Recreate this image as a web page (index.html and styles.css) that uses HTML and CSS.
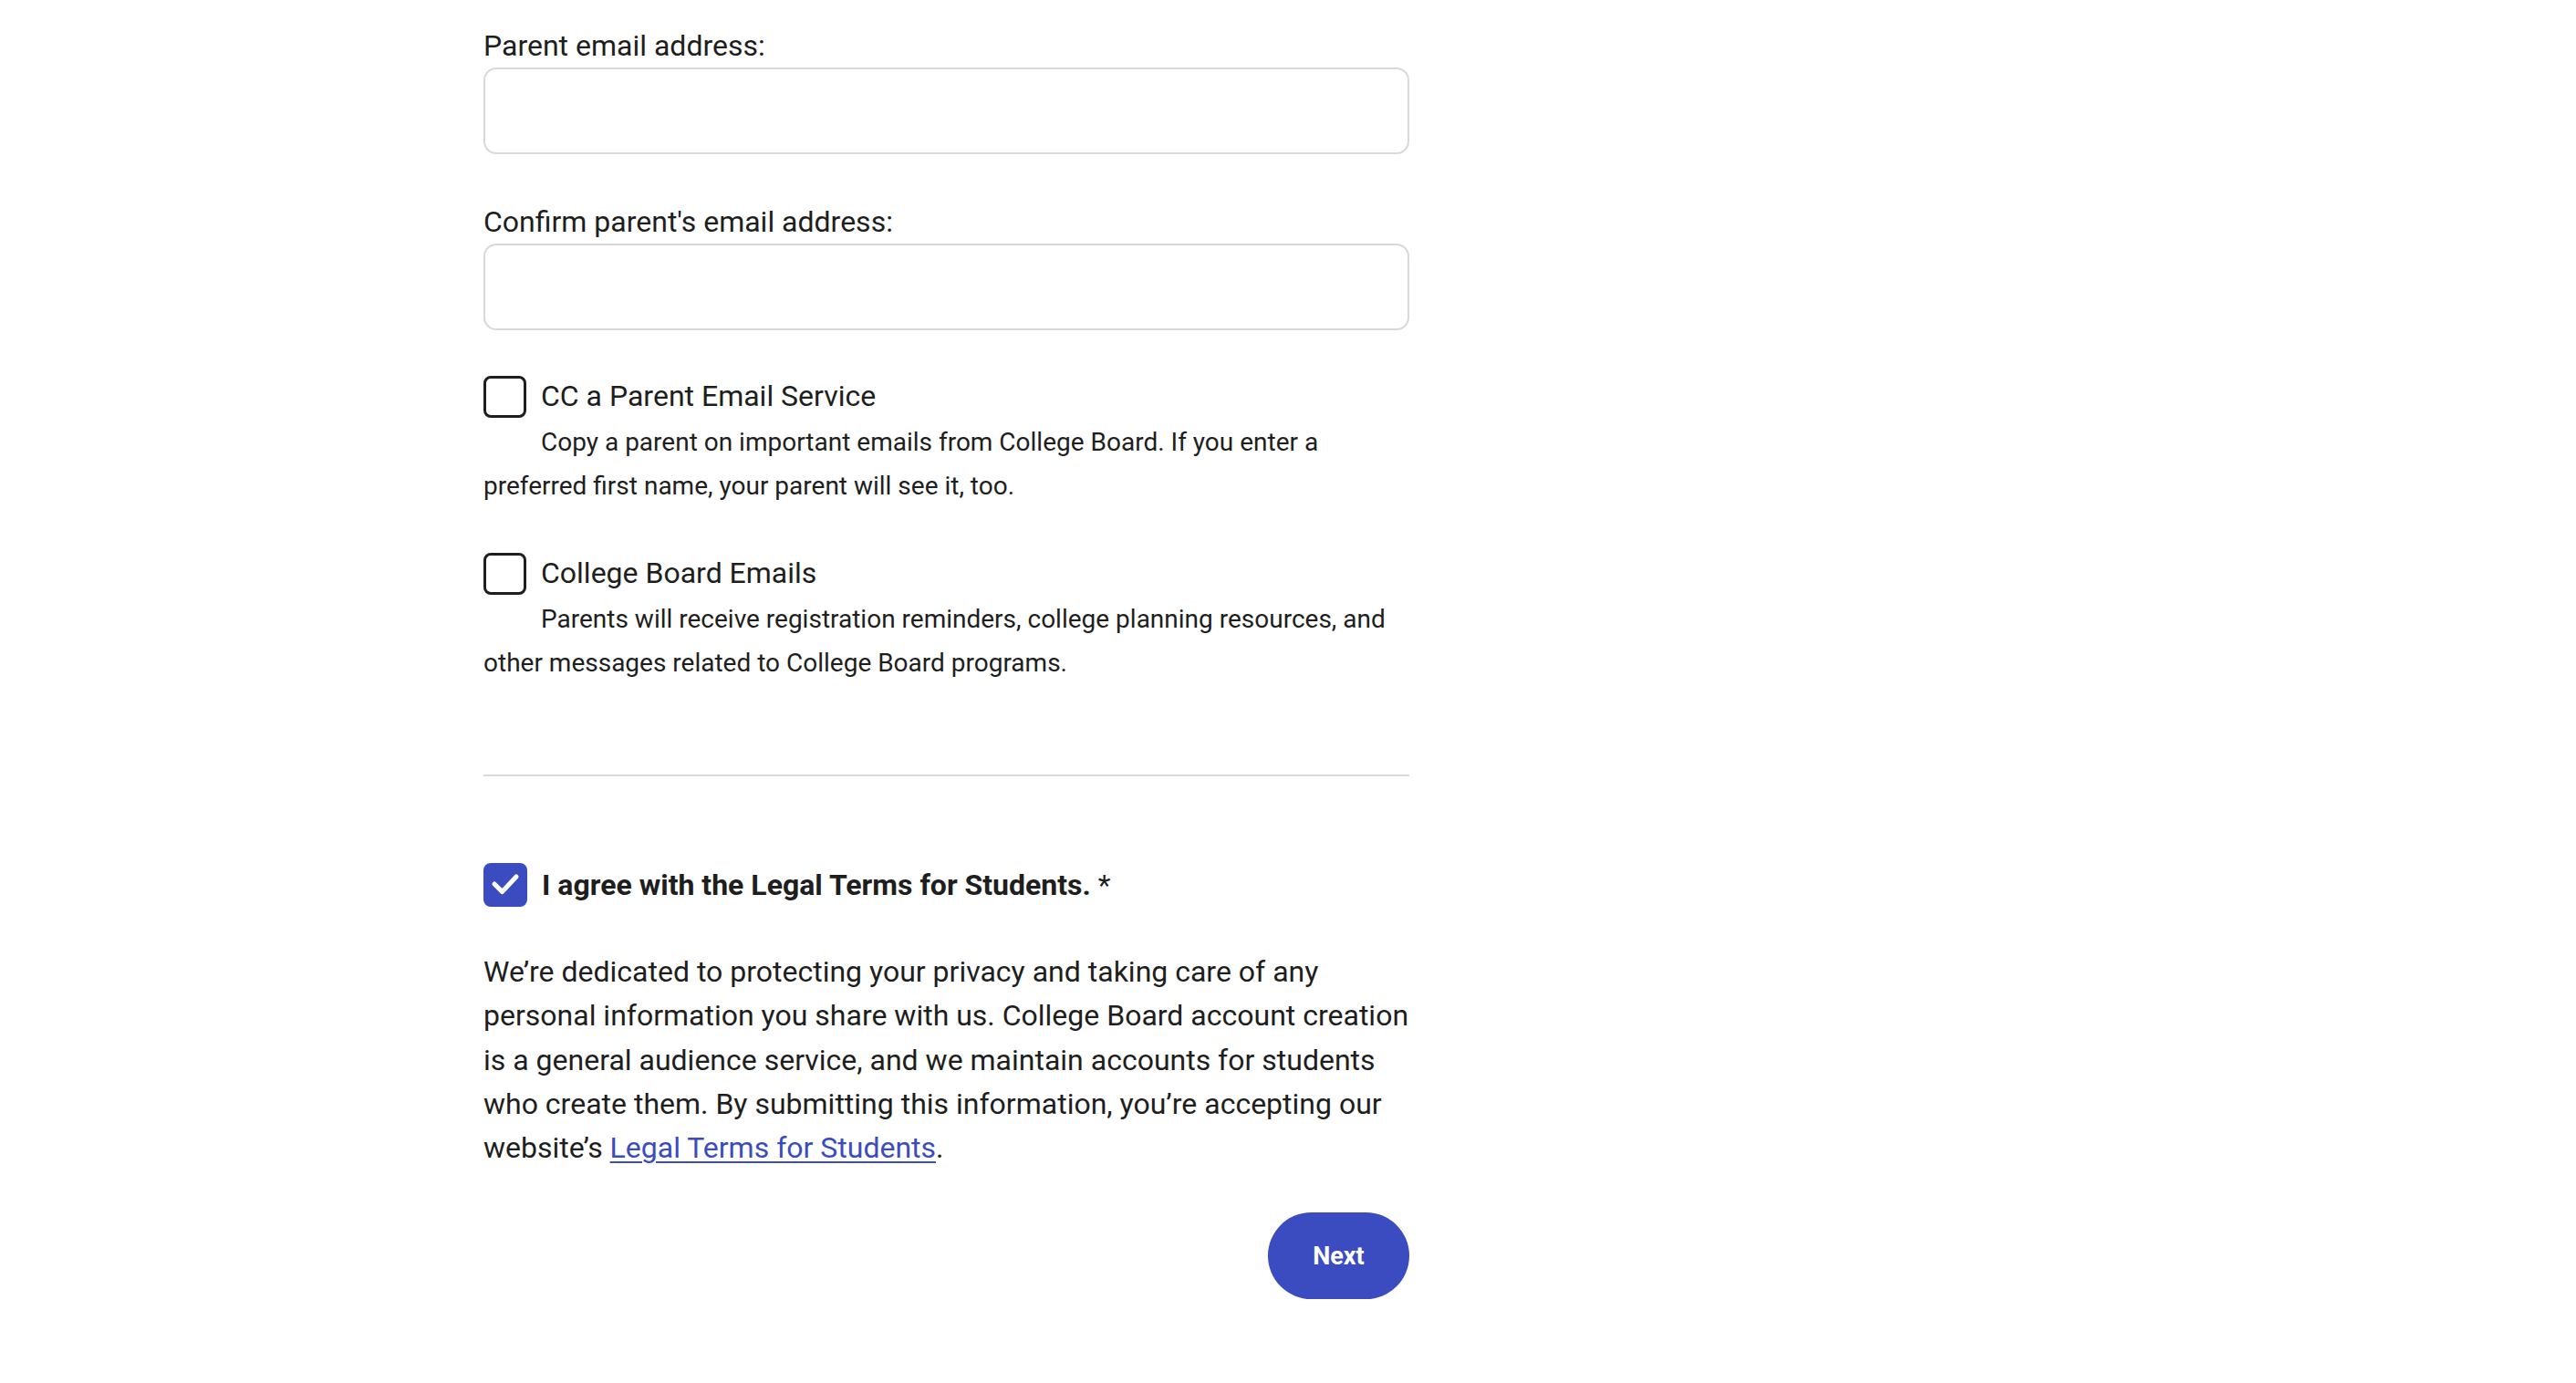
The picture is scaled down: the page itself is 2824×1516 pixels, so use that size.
FILE: index.html
```html
<!DOCTYPE html>
<html lang="en">
<head>
<meta charset="utf-8">
<title>Parent email</title>
<link rel="stylesheet" href="styles.css">
</head>
<body>
<main class="form">
  <div class="field">
    <label class="field-label" for="pemail">Parent email address:</label>
    <input class="text-input" id="pemail" type="email">
  </div>
  <div class="field field-second">
    <label class="field-label" for="pemail2">Confirm parent's email address:</label>
    <input class="text-input" id="pemail2" type="email">
  </div>

  <div class="check-group">
    <div class="check-row">
      <span class="checkbox"></span>
      <span class="check-label">CC a Parent Email Service</span>
    </div>
    <p class="check-desc">Copy a parent on important emails from College Board. If you enter a preferred first name, your parent will see it, too.</p>
  </div>

  <div class="check-group check-group-second">
    <div class="check-row">
      <span class="checkbox"></span>
      <span class="check-label">College Board Emails</span>
    </div>
    <p class="check-desc">Parents will receive registration reminders, college planning resources, and other messages related to College Board programs.</p>
  </div>

  <hr class="divider">

  <div class="check-row agree-row">
    <span class="checkbox checkbox-checked">
      <svg viewBox="0 0 48 48" width="48" height="48" aria-hidden="true"><path d="M12 23 L20.5 31.5 L36 15" fill="none" stroke="#ffffff" stroke-width="5" stroke-linecap="round" stroke-linejoin="round"/></svg>
    </span>
    <span class="check-label"><strong>I agree with the Legal Terms for Students.</strong> *</span>
  </div>

  <p class="privacy">We’re dedicated to protecting your privacy and taking care of any personal information you share with us. College Board account creation is a general audience service, and we maintain accounts for students who create them. By submitting this information, you’re accepting our website’s <a class="privacy-link" href="#">Legal Terms for Students</a>.</p>

  <div class="actions">
    <button class="btn-next" type="button">Next</button>
  </div>
</main>
</body>
</html>
```

FILE: styles.css
```css
html, body {
  margin: 0;
  padding: 0;
  background: #ffffff;
}

body {
  font-family: Roboto, "Noto Sans", "Liberation Sans", sans-serif;
  color: #1e1e1e;
}

.form {
  margin-left: 530px;
  width: 1015px;
  padding-top: 26px;
}

.field {
  display: flex;
  flex-direction: column;
}

.field-second {
  margin-top: 50px;
}

.field-label {
  display: block;
  font-size: 32px;
  line-height: 48px;
}

.text-input {
  display: block;
  box-sizing: border-box;
  width: 100%;
  height: 95px;
  margin: 0;
  border: 2px solid #d9d9d9;
  border-radius: 14px;
  background: #ffffff;
  outline: none;
}

.check-group {
  margin-top: 48px;
}

.check-group-second {
  margin-top: 47px;
}

.check-row {
  display: flex;
  align-items: flex-start;
  gap: 16px;
}

.checkbox {
  flex: 0 0 auto;
  box-sizing: border-box;
  width: 47px;
  height: 46px;
  margin-top: 2px;
  border: 3px solid #1e1e1e;
  border-radius: 8px;
  background: #ffffff;
}

.check-label {
  font-size: 32px;
  line-height: 48px;
}

.check-desc {
  margin: 3px 0 0;
  font-size: 28px;
  line-height: 48px;
  text-indent: 63px;
}

.divider {
  margin: 98px 0 0;
  height: 2px;
  border: none;
  background: #d9d9d9;
}

.agree-row {
  margin-top: 95px;
}

.checkbox-checked {
  width: 48px;
  height: 48px;
  margin-top: 0;
  border: none;
  background: #3a4cc0;
  display: flex;
  align-items: center;
  justify-content: center;
}

.checkbox-checked svg {
  display: block;
}

.agree-row strong {
  font-weight: 700;
}

.privacy {
  margin: 47px 0 0;
  font-size: 32px;
  line-height: 48.3px;
}

.privacy-link {
  color: #3a4cc0;
  text-decoration: underline;
  text-decoration-thickness: 2px;
  text-underline-offset: 4px;
}

.actions {
  display: flex;
  justify-content: flex-end;
  margin-top: 47px;
}

.btn-next {
  width: 155px;
  height: 95px;
  border: none;
  border-radius: 48px;
  background: #3a4cc0;
  color: #ffffff;
  font-family: Roboto, "Noto Sans", "Liberation Sans", sans-serif;
  font-size: 27px;
  font-weight: 700;
  padding: 0;
  cursor: pointer;
}
```
